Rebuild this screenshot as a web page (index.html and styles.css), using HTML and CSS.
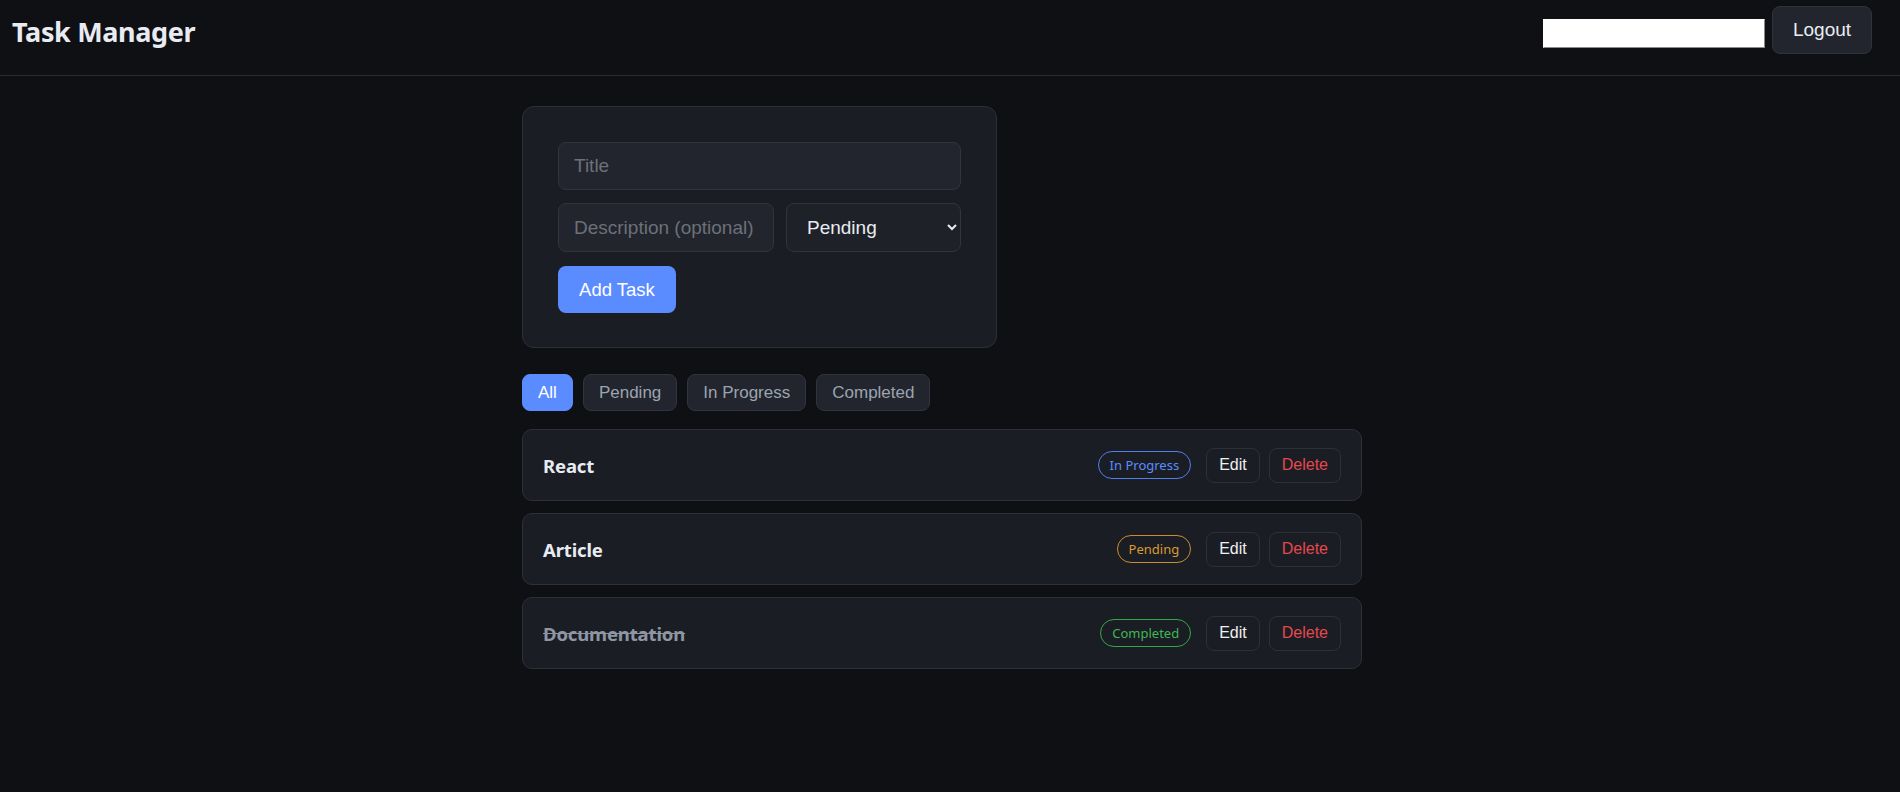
FILE: index.html
```html
<!DOCTYPE html>
<html lang="en">
<head>
<meta charset="utf-8">
<title>Task Manager</title>
<link rel="stylesheet" href="styles.css">
</head>
<body>
<header class="topbar">
  <h1 class="brand">Task Manager</h1>
  <div class="topbar-right">
    <input class="top-input" type="text">
    <button class="btn-logout">Logout</button>
  </div>
</header>
<main class="container">
  <form class="task-form">
    <input class="field field-title" type="text" placeholder="Title">
    <div class="form-row">
      <input class="field field-desc" type="text" placeholder="Description (optional)">
      <select class="field field-select">
        <option>Pending</option>
        <option>In Progress</option>
        <option>Completed</option>
      </select>
    </div>
    <div><button type="button" class="btn-add">Add Task</button></div>
  </form>

  <div class="filters">
    <button class="filter active">All</button>
    <button class="filter">Pending</button>
    <button class="filter">In Progress</button>
    <button class="filter">Completed</button>
  </div>

  <ul class="task-list">
    <li class="task">
      <span class="task-title">React</span>
      <div class="task-actions">
        <span class="badge badge-progress">In Progress</span>
        <button class="btn-small">Edit</button>
        <button class="btn-small danger">Delete</button>
      </div>
    </li>
    <li class="task">
      <span class="task-title">Article</span>
      <div class="task-actions">
        <span class="badge badge-pending">Pending</span>
        <button class="btn-small">Edit</button>
        <button class="btn-small danger">Delete</button>
      </div>
    </li>
    <li class="task done">
      <span class="task-title">Documentation</span>
      <div class="task-actions">
        <span class="badge badge-done">Completed</span>
        <button class="btn-small">Edit</button>
        <button class="btn-small danger">Delete</button>
      </div>
    </li>
  </ul>
</main>
</body>
</html>
```
FILE: styles.css
```css
* { box-sizing: border-box; }
html, body { margin: 0; padding: 0; }
body {
  background: #0f1014;
  color: #e6e8ec;
  font-family: "Liberation Sans", Arial, sans-serif;
  min-height: 792px;
}
.topbar {
  display: flex;
  justify-content: space-between;
  align-items: center;
  height: 76px;
  padding: 6px 28px 21px 12px;
  border-bottom: 1px solid #2b2d35;
}
.brand {
  margin: 2px 0 0 0;
  font-family: "Noto Sans", "Open Sans", sans-serif;
  font-weight: 700;
  font-size: 27px;
  letter-spacing: -0.35px;
  color: #e8ecf2;
}
.topbar-right {
  display: flex;
  align-items: flex-end;
  gap: 7px;
}
.top-input {
  width: 222px;
  height: 29px;
  margin: 0 0 6px 0;
  background: #fff;
  border: 1px solid #fff;
  border-right-color: #8a8a8a;
  border-bottom-color: #8a8a8a;
  padding: 0;
}
.btn-logout {
  width: 100px;
  height: 48px;
  background: #22252d;
  border: 1px solid #2f333b;
  border-radius: 8px;
  color: #e8ecf2;
  font-family: "Liberation Sans", Arial, sans-serif;
  font-size: 19px;
  padding: 0;
}
.container {
  max-width: 856px;
  margin: 30px auto 0;
  padding-right: 16px;
}
.task-form {
  width: 475px;
  background: #1b1d24;
  border: 1px solid #2d3039;
  border-radius: 12px;
  padding: 35px 35px 34px;
  display: flex;
  flex-direction: column;
  gap: 13px;
}
.field {
  background: #22252d;
  border: 1px solid #30343c;
  border-radius: 8px;
  color: #e8ecf2;
  font-family: "Liberation Sans", Arial, sans-serif;
  font-size: 19px;
  padding: 0 15px;
  outline: none;
}
.field::placeholder { color: #6c7079; }
.field-title { width: 100%; height: 48px; }
.form-row { display: flex; gap: 12px; }
.field-desc { width: 216px; height: 49px; }
.field-select {
  width: 175px;
  height: 49px;
  background: #1e2128;
  color-scheme: dark;
  padding: 0 8px 0 16px;
}
.btn-add {
  width: 118px;
  height: 47px;
  margin-top: 1px;
  background: #5b8cff;
  border: none;
  border-radius: 8px;
  color: #ffffff;
  font-family: "Liberation Sans", Arial, sans-serif;
  font-size: 18.5px;
  padding: 0;
}
.filters {
  display: flex;
  gap: 10px;
  margin: 26px 0 18px;
}
.filter {
  height: 37px;
  padding: 0 15px;
  background: #22252d;
  border: 1px solid #30343c;
  border-radius: 8px;
  color: #9ba4b0;
  font-family: "Liberation Sans", Arial, sans-serif;
  font-size: 17px;
}
.filter.active {
  background: #5b8cff;
  border-color: #5b8cff;
  color: #ffffff;
}
.task-list {
  list-style: none;
  margin: 0;
  padding: 0;
  display: flex;
  flex-direction: column;
  gap: 12px;
}
.task {
  height: 72px;
  display: flex;
  align-items: center;
  justify-content: space-between;
  padding: 0 20px 0 20px;
  background: #1b1d24;
  border: 1px solid #2d3039;
  border-radius: 10px;
}
.task-title {
  font-family: "Noto Sans", "Open Sans", sans-serif;
  font-weight: 700;
  font-size: 18.5px;
  letter-spacing: -0.15px;
  color: #e8ecf2;
}
.task.done .task-title {
  color: #8e96a3;
  text-decoration: line-through;
}
.task-actions {
  display: flex;
  align-items: center;
  gap: 9px;
}
.badge {
  height: 28px;
  display: inline-flex;
  align-items: center;
  padding: 0 11px;
  border: 1.5px solid;
  border-radius: 999px;
  font-family: "Noto Sans", "Open Sans", sans-serif;
  font-size: 13px;
  margin-right: 6px;
}
.badge-progress { color: #5b8cff; border-color: #4f7fe8; }
.badge-pending { color: #d99b32; border-color: #c98f2c; }
.badge-done { color: #3fb950; border-color: #36a648; }
.btn-small {
  height: 35px;
  padding: 0 12px;
  background: transparent;
  border: 1px solid #2d3039;
  border-radius: 8px;
  color: #eef0f4;
  font-family: "Liberation Sans", Arial, sans-serif;
  font-size: 16px;
}
.btn-small.danger { color: #e5484d; }
```
